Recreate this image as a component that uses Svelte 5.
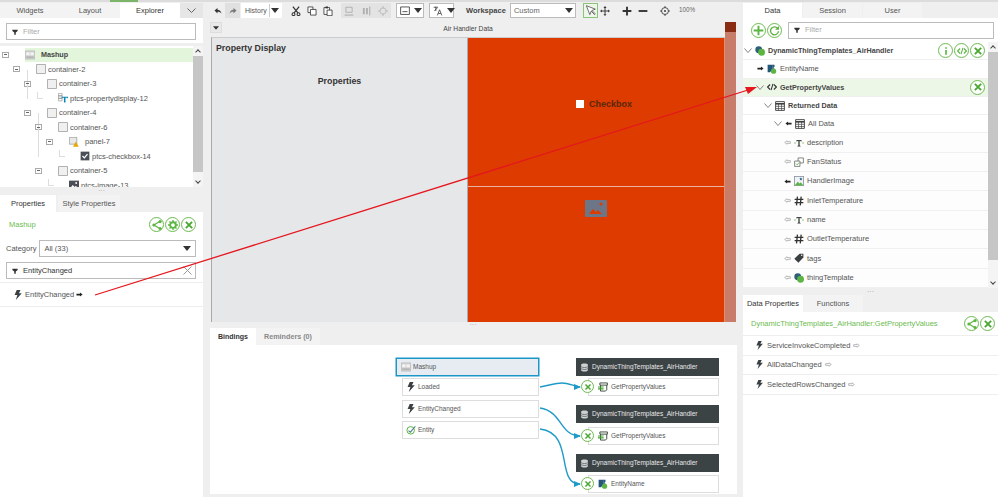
<script>
  const explorer = [
    { name: "Mashup", level: 0, icon: "mashup", exp: true, strong: true },
    { name: "container-2", level: 1, icon: "box", exp: true },
    { name: "container-3", level: 2, icon: "box", exp: true, guides: [27] },
    { name: "ptcs-propertydisplay-12", level: 3, icon: "propdisp", guides: [27] },
    { name: "container-4", level: 2, icon: "box", exp: true },
    { name: "container-6", level: 3, icon: "box", exp: true, guides: [38] },
    { name: "panel-7", level: 4, icon: "panel", exp: true, guides: [38] },
    { name: "ptcs-checkbox-14", level: 5, icon: "check", guides: [38] },
    { name: "container-5", level: 3, icon: "box", exp: true },
    { name: "ptcs-image-13", level: 4, icon: "picture" }
  ];

  const fields = [
    { name: "description", arrow: "hollow", icon: "text" },
    { name: "FanStatus", arrow: "hollow", icon: "fan" },
    { name: "HandlerImage", arrow: "solid", icon: "photo" },
    { name: "InletTemperature", arrow: "hollow", icon: "hash" },
    { name: "name", arrow: "hollow", icon: "text" },
    { name: "OutletTemperature", arrow: "hollow", icon: "hash" },
    { name: "tags", arrow: "hollow", icon: "tag" },
    { name: "thingTemplate", arrow: "hollow", icon: "thing" }
  ];

  const events = ["ServiceInvokeCompleted", "AllDataChanged", "SelectedRowsChanged"];

  const sources = [
    { name: "Loaded", icon: "bolt", top: 33 },
    { name: "EntityChanged", icon: "bolt", top: 55 },
    { name: "Entity", icon: "entity", top: 76 }
  ];

  const targets = [
    { head: 13, top: 33, name: "GetPropertyValues", icon: "service" },
    { head: 60, top: 82, name: "GetPropertyValues", icon: "service" },
    { head: 109, top: 130, name: "EntityName", icon: "entname" }
  ];
</script>

{#snippet ic(name, size = 12)}
  <svg class="ic" width={size} height={size} viewBox="0 0 16 16"><use href="#{name}" /></svg>
{/snippet}

{#snippet round(name)}
  <span class="round"><svg width="10" height="10" viewBox="0 0 16 16"><use href="#{name}" /></svg></span>
{/snippet}

{#snippet caret()}
  <svg class="caret" width="8" height="5" viewBox="0 0 10 6"><path d="M0 0h10L5 6z" /></svg>
{/snippet}

{#snippet chev()}
  <svg class="ic" width="8" height="5" viewBox="0 0 8 5"><path d="M.5.500 4 4.500 7.500.500" fill="none" stroke="#777" stroke-width=".9" /></svg>
{/snippet}

<svg class="defs" width="0" height="0">
  <symbol id="bolt" viewBox="0 0 16 16"><path d="M6 0h6L9.500 5H14L4.500 16 7 8H2.500z" fill="#3a3f42" /></symbol>
  <symbol id="funnel" viewBox="0 0 16 16"><path d="M1 2h14v3l-5 4v6H6V9L1 5z" fill="#333" /></symbol>
  <symbol id="share" viewBox="0 0 16 16"><path d="M13 2 3 8l10 6" fill="none" stroke="#5cb543" stroke-width="2" /><circle cx="3" cy="8" r="2.500" fill="#5cb543" /><circle cx="13" cy="2.500" r="2.500" fill="#5cb543" /><circle cx="13" cy="13.500" r="2.500" fill="#5cb543" /></symbol>
  <symbol id="gear" viewBox="0 0 16 16"><circle cx="8" cy="8" r="4.500" fill="none" stroke="#5cb543" stroke-width="3" /><path d="M8 0v16M0 8h16M2.300 2.300l11.400 11.400M13.700 2.300 2.300 13.700" stroke="#5cb543" stroke-width="2.200" stroke-dasharray="3 10 3" /></symbol>
  <symbol id="cross" viewBox="0 0 16 16"><path d="M3 3l10 10M13 3 3 13" stroke="#4aa832" stroke-width="3" /></symbol>
  <symbol id="info" viewBox="0 0 16 16"><path d="M8 2v2.500M8 6.500V14" stroke="#5cb543" stroke-width="2.600" /></symbol>
  <symbol id="code-g" viewBox="0 0 16 16"><path d="M5 4 1 8l4 4M11 4l4 4-4 4M9.500 3l-3 10" fill="none" stroke="#5cb543" stroke-width="1.700" /></symbol>
  <symbol id="plus" viewBox="0 0 16 16"><path d="M8 1v14M1 8h14" stroke="#5cb543" stroke-width="2.800" /></symbol>
  <symbol id="refresh" viewBox="0 0 16 16"><path d="M13 5.500A5.800 5.800 0 1 0 13.800 9" fill="none" stroke="#5cb543" stroke-width="2" /><path d="M14.500 1.500V7H9z" fill="#5cb543" /></symbol>
  <symbol id="code" viewBox="0 0 16 16"><path d="M5 4 1 8l4 4M11 4l4 4-4 4M9.500 3l-3 10" fill="none" stroke="#333" stroke-width="1.700" /></symbol>
  <symbol id="thing" viewBox="0 0 16 16"><circle cx="6" cy="6" r="5.500" fill="#2d5f78" /><circle cx="10.500" cy="10" r="5.500" fill="#5cb543" /></symbol>
  <symbol id="entname" viewBox="0 0 16 16"><path d="M1 1h11v3L5 13H1z" fill="#23567a" /><path d="M8 1l6 10H9z" fill="#5d7f96" /><circle cx="10.500" cy="11.500" r="4.200" fill="#5cb543" /></symbol>
  <symbol id="table" viewBox="0 0 16 16"><path d="M1 1h14v14H1z" fill="#fff" stroke="#333" stroke-width="1.400" /><path d="M1 4.500h14" stroke="#333" stroke-width="2.400" /><path d="M1 8.500h14M1 12h14M5.500 4v11M10.500 4v11" stroke="#333" stroke-width="1" /></symbol>
  <symbol id="solid" viewBox="0 0 16 16"><path d="M1 8l6-4.500V6h8v4H7v2.500z" fill="#222" /></symbol>
  <symbol id="hollow" viewBox="0 0 16 16"><path d="M1.500 8l5.500-4V6h7.500v4H7v2z" fill="#fff" stroke="#999" stroke-width="1.500" /></symbol>
  <symbol id="solid-r" viewBox="0 0 16 16"><path d="M15 8 9 3.500V6H1v4h8v2.500z" fill="#222" /></symbol>
  <symbol id="hollow-r" viewBox="0 0 16 16"><path d="M14.500 8 9 4V6H1.500v4H9v2z" fill="#fff" stroke="#999" stroke-width="1.500" /></symbol>
  <symbol id="text" viewBox="0 0 16 16"><path d="M0 8h3M13 8h3" stroke="#5cb543" stroke-width="1.200" /><path d="M4 3h8v2.500h-1L10 4.500H9V12l1.500.6v.9h-5v-.9L7 12V4.500H6L5 5.500H4z" fill="#333" /></symbol>
  <symbol id="fan" viewBox="0 0 16 16"><path d="M6.500 1.500h8.500v8H6.500z" fill="#fff" stroke="#444" /><path d="M1 6.500h8.500v8.500H1z" fill="#fff" stroke="#444" /><path d="M3 10.500l2 2 3-3.500" fill="none" stroke="#5cb543" stroke-width="1.400" /></symbol>
  <symbol id="photo" viewBox="0 0 16 16"><path d="M.5.500h15v15H.5z" fill="#eef3f7" stroke="#456" /><path d="M1 15l5-6 3 3 2-2 4 5z" fill="#5cb543" /><path d="M11 2l.8 1.800 1.800.2-1.400 1.200.5 1.800-1.700-1-1.700 1 .5-1.800L8.400 4l1.800-.2z" fill="#23567a" /></symbol>
  <symbol id="hash" viewBox="0 0 16 16"><path d="M5.500 1 4 15M11.500 1 10 15M1 5.500h14M1 10.500h14" stroke="#333" stroke-width="2.100" /></symbol>
  <symbol id="tag" viewBox="0 0 16 16"><path d="M9 1h6v6l-8 8.500L.5 9z" fill="#3a3f42" /><circle cx="12.300" cy="3.700" r="1.200" fill="#fff" /></symbol>
  <symbol id="db" viewBox="0 0 16 16"><path d="M2 3c0-3 12-3 12 0v10c0 3-12 3-12 0z" fill="#cfd2d3" /><path d="M2 6.500c2 2 10 2 12 0M2 10c2 2 10 2 12 0" fill="none" stroke="#3c4345" stroke-width="1.100" /></symbol>
  <symbol id="service" viewBox="0 0 16 16"><path d="M3 1.500h12v3.500H3z" fill="#fff" stroke="#3a4a3a" stroke-width="1.500" /><path d="M4 5v9.500h8l2-2V5" fill="none" stroke="#3a4a3a" stroke-width="1.500" /><path d="M0 8h9M0 11h9" stroke="#3f9f2b" stroke-width="1.700" fill="none" /></symbol>
  <symbol id="entity" viewBox="0 0 16 16"><circle cx="7.500" cy="8.500" r="6" fill="none" stroke="#5cb543" stroke-width="1.600" /><path d="M4 9l3 2.500L15 2" fill="none" stroke="#4a7f8c" stroke-width="1.800" /></symbol>
  <symbol id="mashup" viewBox="0 0 16 16"><path d="M.5 1.500h15v13H.5z" fill="#d9d9d9" stroke="#aaa" /><path d="M2 4h5v4H2zM9 4h5v4H9z" fill="#f4f4f4" /><path d="M2 10h12v3H2z" fill="#b5b5b5" /></symbol>
  <symbol id="box" viewBox="0 0 16 16"><path d="M.8.800h14.400v14.400H.8z" fill="#f0f0f0" stroke="#999" stroke-width="1.200" /></symbol>
  <symbol id="propdisp" viewBox="0 0 16 16"><path d="M.5.500h6v4h-6zM.5 4.500h6v4h-6zM.5 8.500h6v4h-6z" fill="#fff" stroke="#888" /><path d="M6 6h10v2.500h-1l-.5-.8H12V15h-2.500V7.700H7.500L7 8.500H6z" fill="#0e86b8" /></symbol>
  <symbol id="panel" viewBox="0 0 16 16"><path d="M.5.500h12v11H.5z" fill="#e8e8e8" stroke="#888" /><path d="M11 7l4.500 8.500h-9z" fill="#e8a400" /></symbol>
  <symbol id="check" viewBox="0 0 16 16"><path d="M1 1h14v14H1z" fill="#4a4f57" /><path d="M4 8l3 3 5-6" fill="none" stroke="#fff" stroke-width="2" /></symbol>
  <symbol id="picture" viewBox="0 0 16 16"><path d="M0 1h16v14H0z" fill="#4a4f57" /><path d="M2 13l4-5 3 3 2-2 3 4z" fill="#fff" /><circle cx="11.500" cy="4.800" r="1.500" fill="#fff" /></symbol>
  <symbol id="undo" viewBox="0 0 16 16"><path d="M1 7l6-5v3.500c4 0 7 2.500 8 8-2-3-4-4-8-4V13z" fill="#333" /></symbol>
  <symbol id="redo" viewBox="0 0 16 16"><path d="M15 7 9 2v3.500c-4 0-7 2.500-8 8 2-3 4-4 8-4V13z" fill="#777" /></symbol>
  <symbol id="scissors" viewBox="0 0 16 16"><path d="M3 1l8 10M13 1 5 11" stroke="#333" stroke-width="2" /><circle cx="4" cy="13" r="2.300" fill="none" stroke="#333" stroke-width="1.700" /><circle cx="12" cy="13" r="2.300" fill="none" stroke="#333" stroke-width="1.700" /></symbol>
  <symbol id="copy" viewBox="0 0 16 16"><path d="M1.500 1.500h8v9h-8z" fill="#fff" stroke="#333" stroke-width="1.300" /><path d="M5.500 5.500h9v9h-9z" fill="#fff" stroke="#333" stroke-width="1.300" /></symbol>
  <symbol id="paste" viewBox="0 0 16 16"><path d="M1.500 2.500h9v11h-9z" fill="#fff" stroke="#333" stroke-width="1.300" /><path d="M4 .8h4v3H4z" fill="#333" /><path d="M6.500 6.500h8v9h-8z" fill="#fff" stroke="#333" stroke-width="1.300" /></symbol>
  <symbol id="alignh" viewBox="0 0 16 16"><path d="M3 2h10v8H3z" fill="none" stroke="#a8a8a8" stroke-width="1.300" /><path d="M1 14.500h14" stroke="#a8a8a8" stroke-width="1.500" /></symbol>
  <symbol id="alignv" viewBox="0 0 16 16"><path d="M3 3h3v10H3zM8 3h3v10H8z" fill="#b0b0b0" /><path d="M14 1v14" stroke="#a8a8a8" stroke-width="1.500" /></symbol>
  <symbol id="centerd" viewBox="0 0 16 16"><circle cx="8" cy="8" r="5" fill="none" stroke="#b5b5b5" stroke-width="1.300" /><path d="M8 0v4M8 12v4M0 8h4M12 8h4" stroke="#b5b5b5" stroke-width="1.300" /></symbol>
  <symbol id="frame" viewBox="0 0 16 16"><path d="M1 1.500h14v12H1z" fill="#fff" stroke="#333" stroke-width="1.300" /><path d="M4 9h8" stroke="#333" stroke-width="1.300" /></symbol>
  <symbol id="lang" viewBox="0 0 16 16"><path d="M1 2h7M4.500 1v7M2 8l5-5" fill="none" stroke="#333" stroke-width="1.200" /><path d="M7 15l3.500-9 3.500 9M8.500 12h4" fill="none" stroke="#555" stroke-width="1.500" /></symbol>
  <symbol id="pointer" viewBox="0 0 16 16"><path d="M2 1l5 13 2-5 5 5 1-1-5-5 5-2z" fill="#fff" stroke="#444" stroke-width="1.100" /></symbol>
  <symbol id="move" viewBox="0 0 16 16"><path d="M8 0l2.500 3h-5zM8 16l-2.500-3h5zM0 8l3-2.500v5zM16 8l-3 2.500v-5z" fill="#333" /><path d="M8 2v12M2 8h12" stroke="#333" stroke-width="1.500" /></symbol>
  <symbol id="zplus" viewBox="0 0 16 16"><path d="M8 1v14M1 8h14" stroke="#333" stroke-width="3" /></symbol>
  <symbol id="zminus" viewBox="0 0 16 16"><path d="M1 8h14" stroke="#333" stroke-width="3" /></symbol>
  <symbol id="target" viewBox="0 0 16 16"><circle cx="8" cy="8" r="5.500" fill="none" stroke="#333" stroke-width="1.300" /><circle cx="8" cy="8" r="1.500" fill="#333" /><path d="M8 0v3M8 13v3M0 8h3M13 8h3" stroke="#333" stroke-width="1.300" /></symbol>
</svg>

<div class="app">
  <span class="top-mark"></span>

  <aside class="left">
    <nav class="tabs explorer-tabs">
      <span class="tab">Widgets</span>
      <span class="tab">Layout</span>
      <span class="tab on">Explorer</span>
      <span class="tab more"><svg width="9" height="5" viewBox="0 0 9 5"><path d="M.5.500l4 4 4-4" fill="none" stroke="#666" /></svg></span>
    </nav>
    <div class="filter-wrap"><div class="filter">{@render ic("funnel", 6)}<span>Filter</span></div></div>

    <div class="tree-wrap">
      <div class="tree">
        {#each explorer as row}
          <div class="node" style="padding-left: {row.level * 11 + 2}px">
            {#each row.guides ?? [] as x}
              <i class="guide" style="left: {x}px"></i>
            {/each}
            <span class="slot">
              {#if row.exp}<b class="exp"></b>{:else}<b class="elbow"></b>{/if}
            </span>
            <span class="node-body" class:hl={row.strong}>
              {@render ic(row.icon, 10)}
              <span class:strong={row.strong} class:gap={row.strong || row.icon === "panel"}>{row.name}</span>
            </span>
          </div>
        {/each}
      </div>
      <div class="scroll"><span class="up"></span><span class="thumb tree-thumb"></span><span class="down"></span></div>
    </div>

    <div class="dots">···</div>

    <nav class="tabs prop-tabs">
      <span class="tab on">Properties</span>
      <span class="tab">Style Properties</span>
    </nav>
    <section class="props">
      <div class="props-head">
        <span class="green">Mashup</span>
        <span class="rounds">{@render round("share")}{@render round("gear")}{@render round("cross")}</span>
      </div>
      <div class="cat">
        <label for="cat-select">Category</label>
        <div id="cat-select" class="select">All (33){@render caret()}</div>
      </div>
      <div class="prop-filter">
        {@render ic("funnel", 6)}<span>EntityChanged</span>
        <svg class="clear" width="9" height="9" viewBox="0 0 9 9"><path d="M.5.500l8 8M8.500.500l-8 8" stroke="#999" /></svg>
      </div>
      <div class="event-row">{@render ic("bolt", 10)}<span>EntityChanged</span>{@render ic("solid-r", 7)}</div>
    </section>
  </aside>

  <main class="center">
    <div class="toolbar">
      <span class="t undo">{@render ic("undo", 8)}</span>
      <span class="t redo">{@render ic("redo", 8)}</span>
      <div class="select small history">History<span class="sep"></span>{@render caret()}</div>
      <span class="t cut">{@render ic("scissors", 10)}</span>
      <span class="t">{@render ic("copy", 10)}</span>
      <span class="t">{@render ic("paste", 10)}</span>
      <span class="disabled">{@render ic("alignh", 10)}{@render ic("alignv", 10)}{@render ic("centerd", 10)}</span>
      <div class="select small frame-select">{@render ic("frame", 10)}<span class="sep"></span>{@render caret()}</div>
      <div class="select small lang-select">{@render ic("lang", 10)}<span class="sep"></span>{@render caret()}</div>
      <span class="ws-label">Workspace</span>
      <div class="select small ws">Custom{@render caret()}</div>
      <span class="pointer">{@render ic("pointer", 11)}</span>
      <span class="t move">{@render ic("move", 10)}</span>
      <span class="t plus">{@render ic("zplus", 10)}</span>
      <span class="t minus">{@render ic("zminus", 10)}</span>
      <span class="t target">{@render ic("target", 10)}</span>
      <span class="zoom">100%</span>
    </div>

    <div class="stage">
      <div class="stage-main">
        <div class="stage-title">
          <span class="drop">{@render caret()}</span>
          <span class="title-text">Air Handler Data</span>
        </div>
        <div class="canvas">
          <div class="grey">
            <div class="pd-title">Property Display</div>
            <div class="pd-label">Properties</div>
          </div>
          <div class="orange">
            <div class="cell cell-check"><span class="cb"></span><span>Checkbox</span></div>
            <div class="cell cell-img">
              <svg width="22" height="17" viewBox="0 0 22 17"><path d="M0 1q0-1 1-1h20q1 0 1 1v15q0 1-1 1H1q-1 0-1-1z" fill="#6c7686" /><path d="M4 14l4-5 3 3 2-2 4 4z" fill="#dd3b00" /><circle cx="16" cy="4" r="1.500" fill="#dd3b00" /></svg>
            </div>
          </div>
        </div>
      </div>
      <div class="stage-scroll"><span class="stage-up"></span></div>
    </div>

    <div class="dots mid">···</div>

    <nav class="tabs bind-tabs">
      <span class="tab on strong-tab">Bindings</span>
      <span class="tab muted">Reminders (0)</span>
    </nav>
    <section class="diagram">
      <div class="dnode mashup-node">{@render ic("mashup", 10)}<span>Mashup</span></div>
      {#each sources as s}
        <div class="dnode source" style="top: {s.top}px">{@render ic(s.icon, 10)}<span>{s.name}</span></div>
      {/each}
      {#each targets as t}
        <div class="dhead" style="top: {t.head}px">{@render ic("db", 9)}<span>DynamicThingTemplates_AirHandler</span></div>
        <div class="dnode target-node" style="top: {t.top}px">{@render ic(t.icon, 10)}<span>{t.name}</span></div>
        <span class="unlink" style="top: {t.top + 2}px"><svg width="8" height="8" viewBox="0 0 16 16"><use href="#cross" /></svg></span>
      {/each}
      <svg class="wires" width="527" height="149" viewBox="0 0 527 149">
        <path d="M330 42C340 40 347 38 352 38 358 38 364 41 370 42" />
        <path d="M330 63C352 66 350 91 370 91" />
        <path d="M330 84C365 88 345 139 370 139" />
        <path d="M371 42l-7-3v6zM371 91l-7-3v6zM371 139l-7-3v6z" class="heads" />
      </svg>
    </section>
  </main>

  <aside class="right">
    <nav class="tabs data-tabs">
      <span class="tab on">Data</span>
      <span class="tab">Session</span>
      <span class="tab">User</span>
    </nav>
    <div class="data-tools">
      <span class="round big"><svg width="11" height="11" viewBox="0 0 16 16"><use href="#plus" /></svg></span>
      <span class="round big"><svg width="11" height="11" viewBox="0 0 16 16"><use href="#refresh" /></svg></span>
      <div class="filter">{@render ic("funnel", 6)}<span>Filter</span></div>
    </div>
    <div class="data-wrap">
      <div class="data-tree">
        <div class="drow lv0">
          {@render chev()}{@render ic("thing", 10)}<span class="strong">DynamicThingTemplates_AirHandler</span>
          <span class="rounds">{@render round("info")}{@render round("code-g")}{@render round("cross")}</span>
        </div>
        <div class="drow lv1">{@render ic("solid-r", 7)}{@render ic("entname", 10)}<span>EntityName</span></div>
        <div class="drow lv1b sel">
          {@render chev()}{@render ic("code", 10)}<span class="strong">GetPropertyValues</span>
          <span class="rounds">{@render round("cross")}</span>
        </div>
        <div class="drow lv2">{@render chev()}{@render ic("table", 10)}<span class="strong">Returned Data</span></div>
        <div class="drow lv3">{@render chev()}{@render ic("solid", 7)}{@render ic("table", 10)}<span>All Data</span></div>
        {#each fields as f}
          <div class="drow lv4">{@render ic(f.arrow, 7)}{@render ic(f.icon, 10)}<span>{f.name}</span></div>
        {/each}
      </div>
      <div class="scroll data-scroll"><span class="up"></span><span class="thumb data-thumb"></span><span class="down"></span></div>
    </div>

    <div class="dots dots-right">···</div>

    <nav class="tabs dp-tabs">
      <span class="tab on">Data Properties</span>
      <span class="tab">Functions</span>
    </nav>
    <section class="dp">
      <div class="dp-head">
        <span class="green">DynamicThingTemplates_AirHandler:GetPropertyValues</span>
        <span class="rounds">{@render round("share")}{@render round("cross")}</span>
      </div>
      {#each events as e}
        <div class="event-row dp-row">{@render ic("bolt", 9)}<span>{e}</span>{@render ic("hollow-r", 7)}</div>
      {/each}
    </section>
  </aside>

  <svg class="link" width="998" height="497" viewBox="0 0 998 497">
    <path d="M95 295 748 90" stroke="#e5161d" stroke-width="1.300" />
    <path d="M757 87 745 87 748 94z" fill="#e5161d" />
  </svg>
</div>

<style>
  :global(body) {
    margin: 0;
    background: #efefef;
    font-family: "Liberation Sans", Arial, sans-serif;
    color: #555;
  }

  .defs {
    position: absolute;
  }

  .app {
    position: relative;
    display: grid;
    grid-template-columns: 203px 540px 255px;
    width: 998px;
    height: 497px;
    overflow: hidden;
    background: linear-gradient(#dcdcdc 2px, #efefef 2px);
    font-size: 7.500px;
    line-height: 1;
  }

  .top-mark {
    position: absolute;
    left: 110px;
    top: 0;
    width: 28px;
    height: 2px;
    background: #7cb56a;
  }

  .ic {
    flex: none;
    display: block;
  }

  .left,
  .center,
  .right {
    display: flex;
    flex-direction: column;
    min-width: 0;
  }

  /* tabs */
  .tabs {
    display: flex;
    flex: none;
    height: 17px;
  }

  .tab {
    display: flex;
    align-items: center;
    justify-content: center;
    width: 60px;
    white-space: nowrap;
    background: #f3f3f3;
    color: #555;
    font-size: 7.500px;
  }

  .tab.on {
    background: #fff;
    color: #333;
  }

  .strong-tab {
    font-weight: 700;
    font-size: 7px;
  }

  .muted {
    color: #888;
    font-weight: 700;
    font-size: 7.200px;
  }

  .explorer-tabs {
    margin-top: 3px;
    height: 15px;
  }

  .more {
    width: 23px;
    background: #e6e6e6;
  }

  /* filters */
  .filter-wrap {
    background: #fff;
    padding: 5px 7px 3px 6px;
    flex: none;
  }

  .filter {
    display: flex;
    align-items: center;
    gap: 5px;
    height: 15px;
    padding-left: 5px;
    background: #fff;
    border: 1px solid #bbb;
    color: #aaa;
    flex: 1;
  }

  /* explorer tree */
  .tree-wrap {
    display: flex;
    height: 141px;
    margin-top: 3px;
    background: #fff;
    flex: none;
  }

  .tree {
    flex: 1;
    padding-top: 1.500px;
    overflow: hidden;
  }

  .node {
    position: relative;
    display: flex;
    align-items: center;
    height: 14.500px;
  }

  .guide {
    position: absolute;
    top: -7px;
    height: 15px;
    width: 1px;
    background: #ddd;
  }

  .slot {
    position: relative;
    flex: none;
    width: 23px;
    height: 100%;
  }

  .exp {
    position: absolute;
    left: 0;
    top: 4px;
    box-sizing: border-box;
    width: 7px;
    height: 6px;
    border: 1px solid #aaa;
    background: linear-gradient(#666, #666) center / 3px 1px no-repeat;
  }

  .elbow {
    position: absolute;
    left: 13px;
    top: 1px;
    width: 5px;
    height: 6px;
    border-left: 1px solid #ddd;
    border-bottom: 1px solid #ddd;
    margin-left: -11px;
  }

  .node-body {
    display: flex;
    align-items: center;
    gap: 2px;
    flex: 1;
    height: 100%;
  }

  .hl {
    background: #e3f6dc;
  }

  .strong {
    font-weight: 700;
    font-size: 7.200px;
    color: #444;
  }

  .gap {
    margin-left: 4px;
  }

  /* scrollbars */
  .scroll {
    display: flex;
    flex-direction: column;
    flex: none;
    width: 10px;
    background: #f4f4f4;
  }

  .up,
  .down {
    flex: none;
    height: 10px;
    display: flex;
    align-items: center;
    justify-content: center;
  }

  .up::before,
  .down::before {
    content: "";
    width: 3px;
    height: 3px;
    border-left: 1px solid #444;
    border-top: 1px solid #444;
    transform: translateY(1px) rotate(45deg);
  }

  .down::before {
    transform: translateY(-1px) rotate(225deg);
  }

  .thumb {
    flex: none;
    background: #c6c6c6;
  }

  .tree-thumb {
    height: 116px;
  }

  .data-thumb {
    height: 208px;
  }

  .down {
    margin-top: auto;
  }

  .dots {
    flex: none;
    height: 8px;
    line-height: 8px;
    text-align: center;
    color: #999;
    font-size: 7px;
  }

  .dots-right {
    height: 7px;
    line-height: 7px;
  }

  /* properties */
  .prop-tabs .tab {
    width: 56px;
  }

  .prop-tabs .tab + .tab {
    width: 62px;
    margin-left: 2px;
  }

  .props {
    flex: 1;
    background: #fff;
  }

  .props-head {
    display: flex;
    align-items: center;
    justify-content: space-between;
    height: 25px;
    padding: 0 7px 0 9px;
  }

  .green {
    color: #6cbb4f;
  }

  .rounds {
    display: flex;
    gap: 1px;
    margin-left: auto;
  }

  .round {
    display: flex;
    align-items: center;
    justify-content: center;
    width: 15px;
    height: 15px;
    box-sizing: border-box;
    background: #fff;
    border: 1px solid #6cbb4f;
    border-radius: 50%;
  }

  .round.big {
    flex: none;
  }

  .cat {
    display: flex;
    align-items: center;
    gap: 3px;
    padding: 3px 7px 0 6px;
  }

  .select {
    display: flex;
    align-items: center;
    justify-content: space-between;
    flex: 1;
    box-sizing: border-box;
    height: 17px;
    padding: 0 4px;
    background: #fff;
    border: 1px solid #bbb;
  }

  .caret {
    flex: none;
    fill: #333;
  }

  .prop-filter {
    position: relative;
    display: flex;
    align-items: center;
    gap: 5px;
    box-sizing: border-box;
    height: 17px;
    margin: 5px 7px 0 6px;
    padding-left: 5px;
    border: 1px solid #bbb;
    color: #333;
  }

  .clear {
    position: absolute;
    right: 3px;
    top: 3px;
  }

  .event-row {
    display: flex;
    align-items: center;
    gap: 2px;
    height: 23px;
    margin-top: 3px;
    padding-left: 13px;
    border-top: 1px solid #eee;
    border-bottom: 1px solid #eee;
  }

  /* toolbar */
  .toolbar {
    display: flex;
    align-items: center;
    flex: none;
    height: 15px;
    margin-top: 3px;
    padding-left: 7px;
  }

  .t {
    display: flex;
    align-items: center;
    justify-content: center;
    flex: none;
    width: 15px;
    height: 15px;
  }

  .cut ~ .t {
    margin-left: 1px;
  }

  .redo {
    background: #e0e0e0;
  }

  .toolbar .select.small {
    flex: none;
    height: 15px;
    padding: 0 2px 0 3px;
    gap: 0;
  }

  .sep {
    width: 1px;
    height: 100%;
    background: #ccc;
    margin: 0 2px;
  }

  .history {
    width: 41px;
    margin-left: 1px;
    border-color: transparent;
    font-size: 7px;
  }

  .toolbar .cut {
    margin-left: 6px;
  }

  .disabled {
    display: flex;
    align-items: center;
    justify-content: space-around;
    flex: none;
    width: 50px;
    height: 15px;
    margin: 0 5px 0 6px;
    background: #e3e3e3;
  }

  .frame-select {
    width: 28px;
    margin-right: 5px;
  }

  .lang-select {
    width: 25px;
  }

  .ws-label {
    margin-left: 12px;
    font-weight: 700;
    color: #444;
  }

  .ws {
    width: 66px;
    margin-left: 4px;
    color: #666;
  }

  .pointer {
    display: flex;
    align-items: center;
    justify-content: center;
    flex: none;
    width: 15px;
    height: 15px;
    margin-left: 7px;
    border: 1px solid #8cc37a;
    background: #eef6ea;
    box-sizing: border-box;
  }

  .toolbar .move {
    margin-left: 0;
  }

  .toolbar .plus {
    margin-left: 7px;
  }

  .toolbar .target {
    margin-left: 7px;
  }

  .zoom {
    margin-left: 6px;
    font-size: 6.300px;
    color: #666;
  }

  /* canvas */
  .stage {
    display: flex;
    flex: none;
    height: 300px;
    margin-top: 4px;
    padding: 0 7px 0 8px;
  }

  .stage-main {
    flex: 1;
    display: flex;
    flex-direction: column;
  }

  .stage-title {
    position: relative;
    flex: none;
    height: 15px;
    text-align: center;
    line-height: 14px;
    font-size: 6.700px;
  }

  .drop {
    position: absolute;
    left: -1px;
    top: 0;
    display: flex;
    align-items: center;
    justify-content: center;
    width: 12px;
    height: 11px;
    background: #e9e9e9;
    border: 1px solid #ddd;
    box-sizing: border-box;
  }

  .drop .caret {
    width: 6px;
    height: 4px;
  }

  .title-text {
    color: #444;
  }

  .canvas {
    flex: 1;
    display: grid;
    grid-template-columns: 256px 1fr;
    border-left: 1px solid #aaa;
    border-top: 1px solid #ccc;
  }

  .grey {
    background: #e6e7e9;
    border-right: 1px solid #aab;
    color: #333;
    font-weight: 700;
    font-size: 8.800px;
  }

  .pd-title {
    padding: 6px 0 0 4px;
  }

  .pd-label {
    margin-top: 24px;
    text-align: center;
  }

  .orange {
    display: grid;
    grid-template-rows: 149px 1fr;
    background: #dd3b00;
    border-right: 1px solid #ec8a66;
    color: #5a2708;
    font-weight: 700;
    font-size: 9px;
  }

  .cell {
    display: flex;
    align-items: flex-start;
    justify-content: center;
    gap: 5px;
    padding-top: 62px;
    border-bottom: 1px solid #ecb3a0;
  }

  .cell-check {
    padding-left: 16px;
  }

  .cb {
    width: 8px;
    height: 8px;
    background: #fff;
  }

  .cell-img {
    padding-top: 13px;
    border-bottom: 0;
  }

  .stage-scroll {
    flex: none;
    width: 11px;
    background: #c87c6a;
  }

  .stage-up {
    display: block;
    height: 10px;
    background: #8a2c14;
  }

  .mid {
    height: 6px;
    line-height: 6px;
  }

  /* bindings */
  .bind-tabs {
    margin-left: 7px;
  }

  .bind-tabs .tab {
    width: 46px;
  }

  .bind-tabs .tab + .tab {
    width: 64px;
  }

  .diagram {
    position: relative;
    flex: none;
    height: 149px;
    margin-left: 7px;
    margin-right: 6px;
    background: #fff;
  }

  .dnode {
    position: absolute;
    display: flex;
    align-items: center;
    gap: 2px;
    box-sizing: border-box;
    height: 18px;
    background: #fff;
    border: 1px solid #ddd;
    font-size: 6.500px;
    color: #555;
  }

  .mashup-node {
    left: 186px;
    top: 13px;
    width: 143px;
    padding-left: 4px;
    background: #e6ecf2;
    border: 1px solid #1b97c7;
    box-shadow: 0 0 0 .5px #1b97c7;
  }

  .source {
    left: 192px;
    width: 137px;
    padding-left: 3px;
  }

  .target-node {
    left: 378px;
    width: 131px;
    padding-left: 9px;
    gap: 3px;
  }

  .dhead {
    position: absolute;
    left: 366px;
    width: 143px;
    height: 18px;
    display: flex;
    align-items: center;
    gap: 3px;
    padding-left: 4px;
    box-sizing: border-box;
    background: #3c4345;
    color: #e8e8e8;
    font-size: 6.500px;
  }

  .unlink {
    position: absolute;
    left: 371px;
    display: flex;
    align-items: center;
    justify-content: center;
    box-sizing: border-box;
    width: 13px;
    height: 13px;
    background: #fff;
    border: 1px solid #6cbb4f;
    border-radius: 50%;
  }

  .wires {
    position: absolute;
    left: 0;
    top: 0;
    fill: none;
    stroke: #1f9ac9;
    stroke-width: 1.400;
    pointer-events: none;
  }

  .heads {
    fill: #1f9ac9;
    stroke: none;
  }

  /* data panel */
  .data-tabs {
    height: 15px;
    margin-top: 3px;
  }

  .data-tabs .tab {
    width: 59px;
    margin-right: 1px;
  }

  .data-tools {
    display: flex;
    align-items: center;
    gap: 1px;
    flex: none;
    height: 24px;
    padding: 0 4px 0 8px;
    background: #fff;
  }

  .data-tools .filter {
    margin-left: 5px;
    height: 17px;
    box-sizing: border-box;
  }

  .data-wrap {
    display: flex;
    flex: none;
    height: 246px;
    background: #fff;
  }

  .data-tree {
    flex: 1;
  }

  .drow {
    display: flex;
    align-items: center;
    gap: 3px;
    box-sizing: border-box;
    height: 18.300px;
    padding-right: 3px;
    border-bottom: 1px solid #f0f0f0;
  }

  .lv0 {
    padding-left: 1px;
  }

  .lv1 {
    padding-left: 14px;
  }

  .lv1b {
    padding-left: 13px;
  }

  .sel {
    background: #edf7e8;
  }

  .lv2 {
    padding-left: 21px;
  }

  .lv3 {
    padding-left: 31px;
  }

  .lv4 {
    height: 19.300px;
    padding-left: 41px;
    background: #fdfdfd;
  }

  .dp-tabs .tab {
    width: 60px;
  }

  .dp {
    flex: 1;
    background: #fff;
  }

  .dp-head {
    display: flex;
    align-items: center;
    box-sizing: border-box;
    height: 24px;
    padding: 0 3px 0 8px;
    border-bottom: 1px solid #eee;
  }

  .dp-row {
    box-sizing: border-box;
    height: 19.500px;
    margin-top: 0;
    padding-left: 12px;
    gap: 3px;
    border-top: 0;
  }

  .link {
    position: absolute;
    left: 0;
    top: 0;
    pointer-events: none;
  }
</style>
